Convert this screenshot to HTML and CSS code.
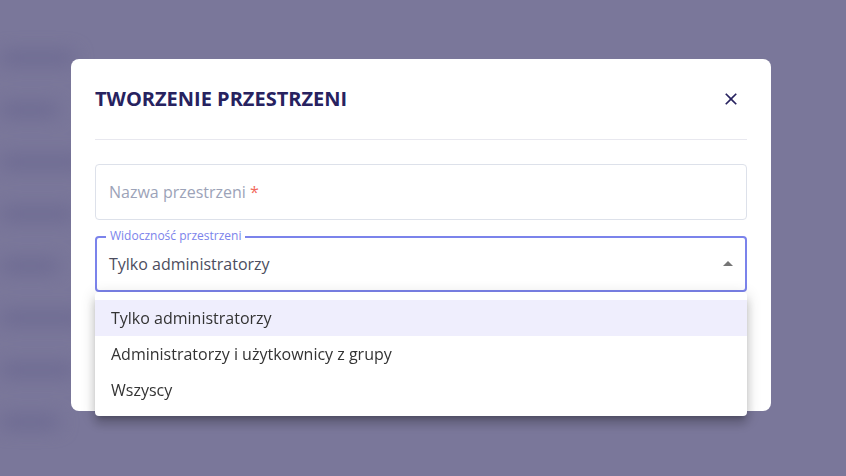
FILE: index.html
```html
<!DOCTYPE html>
<html lang="pl">
<head>
  <meta charset="utf-8">
  <title>Tworzenie przestrzeni</title>
  <meta name="viewport" content="width=device-width, initial-scale=1">
  <link rel="stylesheet" href="styles.css">
</head>
<body>
  <!-- strona pod spodem, rozmyta przez nakladke -->
  <div class="page">
    <div class="row"><span class="bar w1"></span></div>
    <div class="row"><span class="bar w2"></span></div>
    <div class="row"><span class="bar w3"></span></div>
    <div class="row"><span class="bar w1"></span></div>
    <div class="row"><span class="bar w2"></span></div>
    <div class="row"><span class="bar w3"></span></div>
    <div class="row"><span class="bar w1"></span></div>
    <div class="row"><span class="bar w2"></span></div>
  </div>

  <div class="overlay">
    <div class="modal">
      <div class="modal-header">
        <h2>TWORZENIE PRZESTRZENI</h2>
        <button class="close-btn" type="button" aria-label="Zamknij">
          <svg viewBox="0 0 24 24" width="20" height="20"><path d="M19 6.41 17.59 5 12 10.59 6.41 5 5 6.41 10.59 12 5 17.59 6.41 19 12 13.41 17.59 19 19 17.59 13.41 12z"/></svg>
        </button>
      </div>

      <div class="modal-body">
        <div class="field">
          <span class="placeholder">Nazwa przestrzeni <span class="req">*</span></span>
        </div>

        <div class="select">
          <span class="select-label">Widoczność przestrzeni</span>
          <span class="select-value">Tylko administratorzy</span>
          <svg class="caret" viewBox="0 0 24 24" width="24" height="24"><path d="M7 14l5-5 5 5z"/></svg>

          <ul class="menu">
            <li class="selected">Tylko administratorzy</li>
            <li>Administratorzy i użytkownicy z grupy</li>
            <li>Wszyscy</li>
          </ul>
        </div>
      </div>
    </div>
  </div>
</body>
</html>
```

FILE: styles.css
```css
* {padding: 0; margin: 0; box-sizing: border-box;}
html {font-family: "Open Sans", "Noto Sans", Arial, sans-serif;}

body {margin: 0; background-color: #7a779a; height: 100vh; overflow: hidden;}

.page {padding-top: 32px; filter: blur(9px);}
.page .row {height: 52px; display: flex; align-items: center;}
.page .bar {display: block; height: 12px; background-color: #6b6890; border-radius: 6px;}
.page .w1 {width: 75px;}
.page .w2 {width: 60px;}
.page .w3 {width: 85px;}

.overlay {position: fixed; inset: 0; display: flex; align-items: flex-start; padding: 59px 0 0 71px;}

.modal {
    width: 700px;
    height: 352px;
    padding: 0 24px;
    background-color: white;
    border-radius: 8px;
}

.modal-header {
    display: flex;
    justify-content: space-between;
    align-items: center;
    padding: 24px 0;
    border-bottom: 1px solid #e8e8ef;
}

.modal-header h2 {font-size: 20px; line-height: 32px; font-weight: 700; color: #27225f;}

.close-btn {
    width: 32px;
    height: 32px;
    display: flex;
    justify-content: center;
    align-items: center;
    border: none;
    background: none;
    cursor: pointer;
    fill: #27225f;
}

.modal-body {padding-top: 24px;}

.field {
    height: 56px;
    padding: 0 13px;
    display: flex;
    align-items: center;
    border: 1px solid #dde1ea;
    border-radius: 4px;
}

.placeholder {font-size: 16px; color: #9ca3b8;}
.placeholder .req {color: #f2685c;}

.select {
    position: relative;
    margin-top: 16px;
    height: 56px;
    padding: 0 5px 0 12px;
    display: flex;
    align-items: center;
    justify-content: space-between;
    border: 2px solid #7b83eb;
    border-radius: 4px;
}

.select-label {
    position: absolute;
    top: -10px;
    left: 9px;
    padding: 0 4px;
    font-size: 12px;
    line-height: 16px;
    color: #7b83eb;
    background-color: white;
}

.select-value {font-size: 16px; color: #4c4d5e;}

.caret {fill: #757575;}

.menu {
    position: absolute;
    top: 100%;
    left: -2px;
    right: -2px;
    margin-top: 2px;
    padding: 8px 0;
    list-style: none;
    background-color: white;
    border-radius: 4px;
    box-shadow: 0 5px 5px -3px rgba(0,0,0,.2), 0 8px 10px 1px rgba(0,0,0,.14), 0 3px 14px 2px rgba(0,0,0,.12);
}

.menu li {padding: 6px 16px; font-size: 16px; line-height: 24px; color: #333;}
.menu li.selected {background-color: #efeefd;}
```
